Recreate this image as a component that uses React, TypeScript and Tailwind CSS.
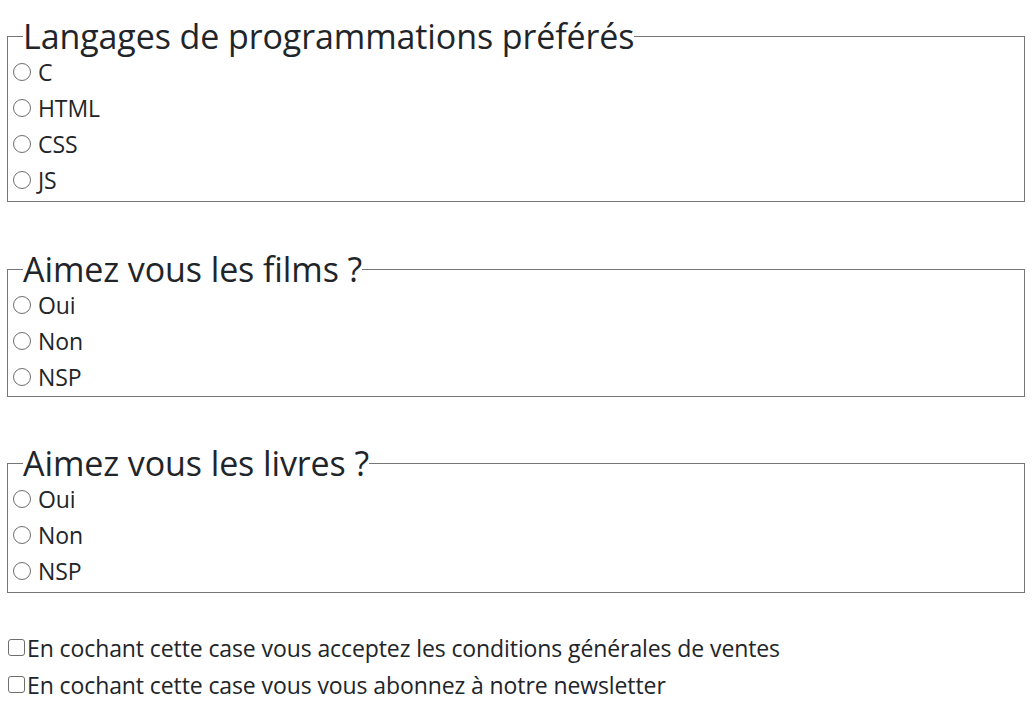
import React from 'react';

const FONT = { fontFamily: '"Open Sans", "Noto Sans", sans-serif' };

function RadioRow({ name, label }: { name: string; label: string }) {
  return (
    <label className="flex items-center h-[36px]">
      <input
        type="radio"
        name={name}
        className="appearance-none shrink-0 ml-[5px] mr-[7px] w-[18px] h-[18px] rounded-full border-[1.5px] border-[#6e6e6e] bg-white"
      />
      <span>{label}</span>
    </label>
  );
}

function Group({ title, name, options, className = '' }: { title: string; name: string; options: string[]; className?: string }) {
  return (
    <fieldset className={`border border-[#767676] ${className}`}>
      <legend className="ml-[15px] text-[34px] leading-[36px]">{title}</legend>
      {options.map((o) => (
        <RadioRow key={o} name={name} label={o} />
      ))}
    </fieldset>
  );
}

function CheckRow({ label }: { label: string }) {
  return (
    <label className="flex items-center h-[37px]">
      <input
        type="checkbox"
        className="appearance-none shrink-0 ml-[1px] mr-[2px] w-[17px] h-[17px] rounded-[3px] border-[1.5px] border-[#6e6e6e] bg-white"
      />
      <span>{label}</span>
    </label>
  );
}

export default function App() {
  return (
    <div className="min-h-[703px] bg-white text-[#212529] text-[23px] leading-[36px] tracking-[-0.1px] px-[7px] pt-[18px] pr-[10px]" style={FONT}>
      <form>
        <Group title="Langages de programmations préférés" name="lang" options={['C', 'HTML', 'CSS', 'JS']} className="pb-[3px]" />
        <Group title="Aimez vous les films ?" name="films" options={['Oui', 'Non', 'NSP']} className="mt-[49px] pb-[1px]" />
        <Group title="Aimez vous les livres ?" name="livres" options={['Oui', 'Non', 'NSP']} className="mt-[48px] pb-[3px]" />
        <div className="mt-[36px]">
          <CheckRow label="En cochant cette case vous acceptez les conditions générales de ventes" />
          <CheckRow label="En cochant cette case vous vous abonnez à notre newsletter" />
        </div>
      </form>
    </div>
  );
}
